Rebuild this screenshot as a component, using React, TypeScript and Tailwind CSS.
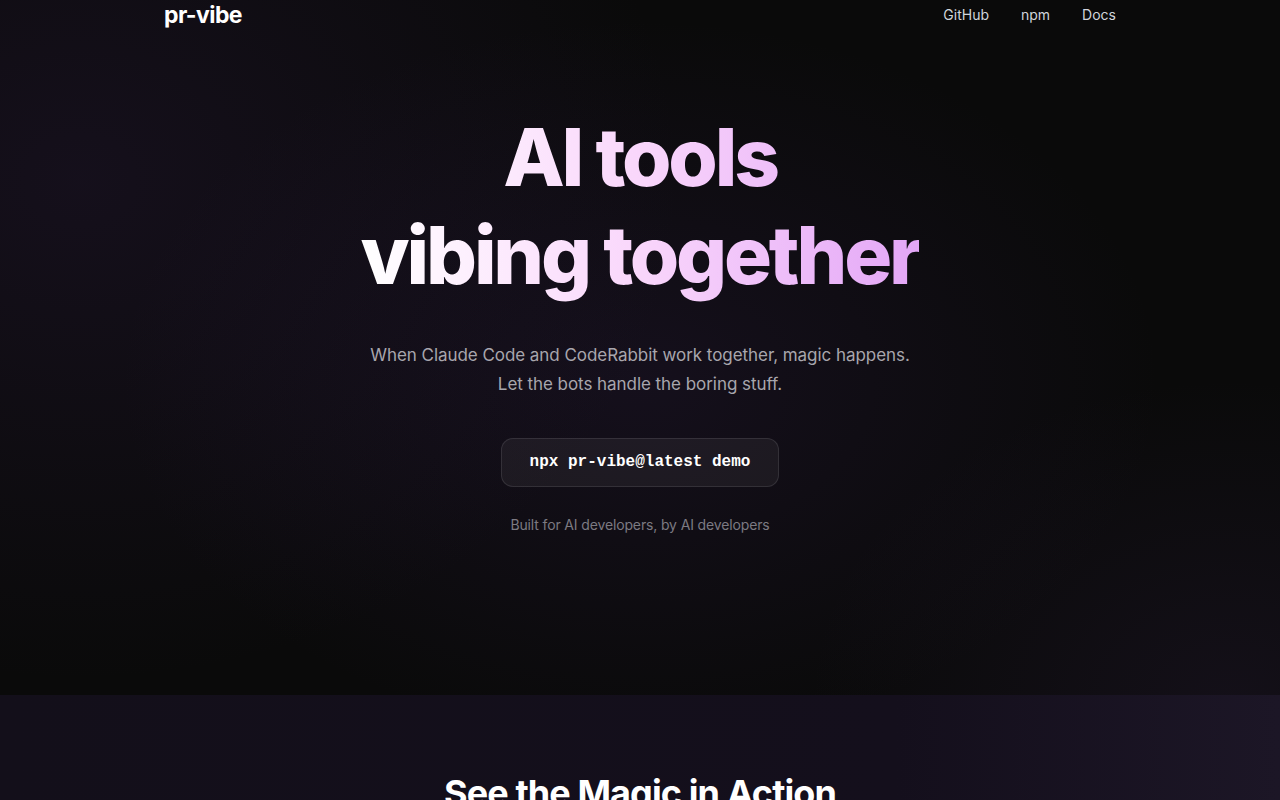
export default function App() {
  return (
    <div className="min-h-screen bg-[#0a0a0a] text-white font-['Inter','Liberation_Sans',sans-serif]">
      <section className="relative overflow-hidden h-[695px] bg-[radial-gradient(ellipse_600px_500px_at_80px_180px,rgba(60,35,90,0.22),transparent),radial-gradient(ellipse_520px_360px_at_640px_380px,rgba(70,40,110,0.18),transparent),radial-gradient(ellipse_420px_320px_at_1230px_700px,rgba(70,45,100,0.16),transparent)]">
        <nav className="mx-auto flex h-[30px] max-w-[952px] items-center justify-between">
          <a className="text-[23px] font-bold tracking-tight text-white">pr-vibe</a>
          <div className="flex items-center gap-8 text-sm text-gray-300">
            <a>GitHub</a>
            <a>npm</a>
            <a>Docs</a>
          </div>
        </nav>

        <div className="flex flex-col items-center pt-[78px] text-center">
          <h1 className="bg-gradient-to-r from-white via-[#f9d6fb] to-[#e3a6f6] bg-clip-text text-[80px] font-extrabold leading-[1.22] tracking-[-0.04em] text-transparent">
            AI tools
            <br />
            vibing together
          </h1>
          <p className="mt-[38px] text-[17px] leading-[29px] tracking-[-0.003em] text-[#a8a6ad]">
            When Claude Code and CodeRabbit work together, magic happens.
            <br />
            Let the bots handle the boring stuff.
          </p>
          <div className="mt-[39px] rounded-xl border border-white/10 bg-white/5 px-7 py-3 font-['Liberation_Mono',monospace] text-base font-bold leading-[23px] text-white">
            npx pr-vibe@latest demo
          </div>
          <p className="mt-7 text-sm tracking-[-0.01em] text-[#7c7a82]">Built for AI developers, by AI developers</p>
        </div>
      </section>

      <section className="bg-[linear-gradient(90deg,#130f1a_0%,#140f1c_70%,#1c1626_100%)] pt-[78px] pb-20">
        <h2 className="text-center text-4xl font-bold tracking-tight text-white">See the Magic in Action</h2>
      </section>
    </div>
  );
}
